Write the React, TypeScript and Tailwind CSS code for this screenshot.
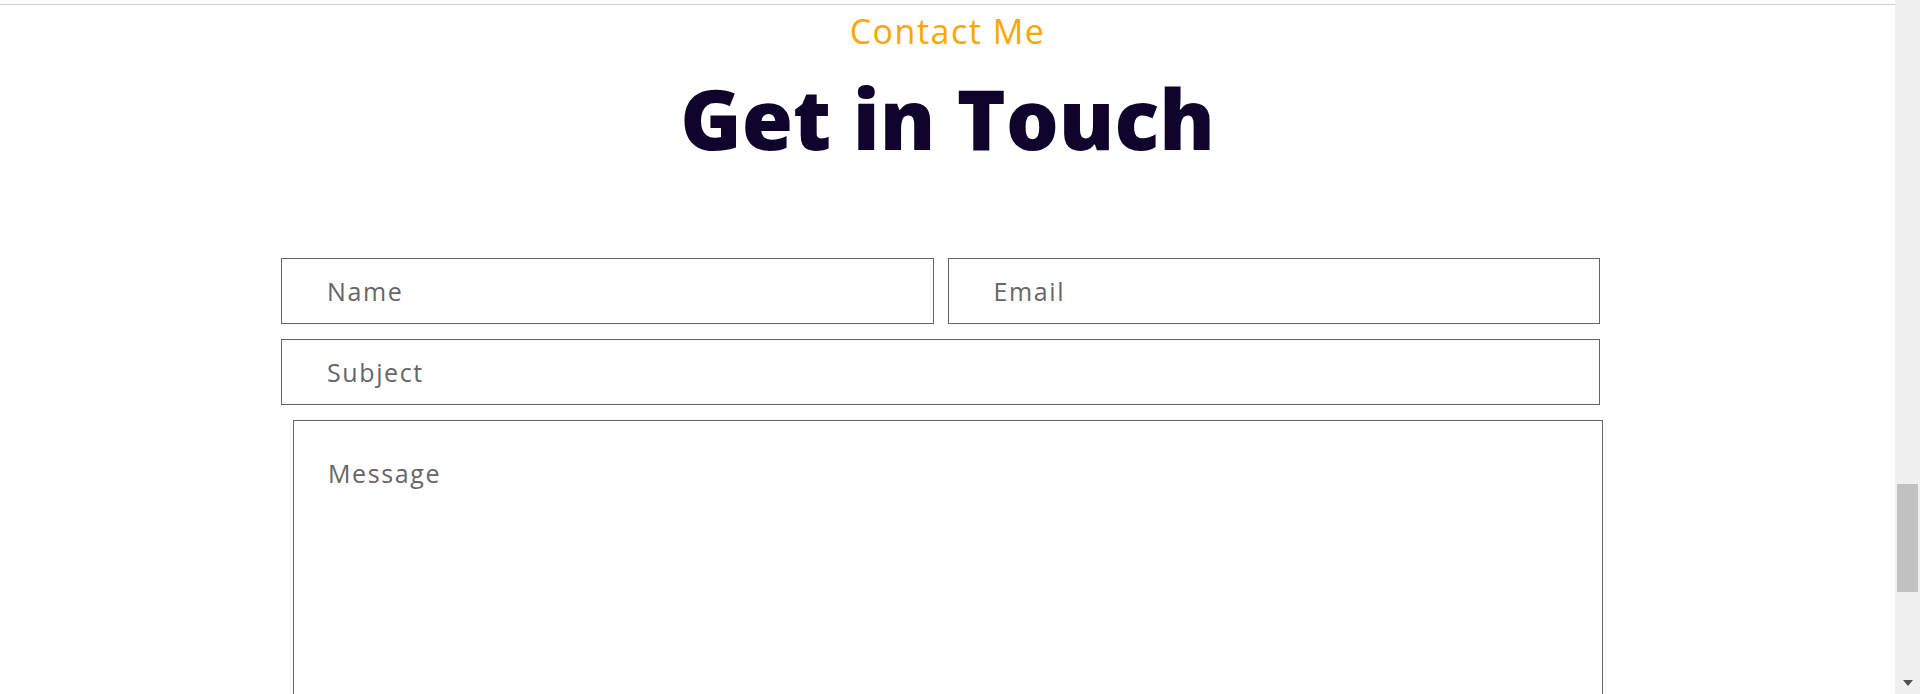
const fields = {
  font: "font-['Open_Sans',_'Noto_Sans',_sans-serif]",
};

function Field({ placeholder }: { placeholder: string }) {
  return (
    <input
      type="text"
      placeholder={placeholder}
      className="h-[66px] min-w-0 flex-1 border border-[#666] bg-white pl-[45px] text-[25px] tracking-[1.6px] text-[#333] outline-none placeholder:text-[#666]"
    />
  );
}

export default function App() {
  return (
    <div className={`flex h-[694px] w-full overflow-hidden bg-white ${fields.font}`}>
      <main className="flex-1">
        {/* línea superior */}
        <div className="mt-[4px] h-px bg-[#cccccc]" />

        {/* títulos */}
        <p className="mt-[9px] text-center text-[34px] leading-[34px] tracking-[1.5px] text-[#ffa500]">
          Contact Me
        </p>
        <h2 className="mt-[28px] text-center text-[83px] font-extrabold leading-[83px] text-[#10042d]">
          Get in Touch
        </h2>

        {/* formulario */}
        <form className="mt-[99px] ml-[281px] flex w-[1319px] flex-col gap-[15px]">
          <div className="flex gap-[14px]">
            <Field placeholder="Name" />
            <Field placeholder="Email" />
          </div>
          <div className="flex">
            <Field placeholder="Subject" />
          </div>
          <textarea
            placeholder="Message"
            className="ml-[12px] h-[320px] w-[1310px] resize-none border border-[#666] bg-white px-[34px] pt-[34px] text-[25px] tracking-[1.6px] text-[#333] outline-none placeholder:text-[#666]"
          />
        </form>
      </main>

      {/* barra de desplazamiento */}
      <aside className="flex w-[25px] flex-col items-center bg-[#f0f0f0]">
        <div className="mt-[484px] h-[108px] w-[21px] bg-[#c1c1c1]" />
        <div className="mt-[88px] h-0 w-0 border-x-[5.5px] border-t-[6px] border-x-transparent border-t-[#505050]" />
      </aside>
    </div>
  );
}
